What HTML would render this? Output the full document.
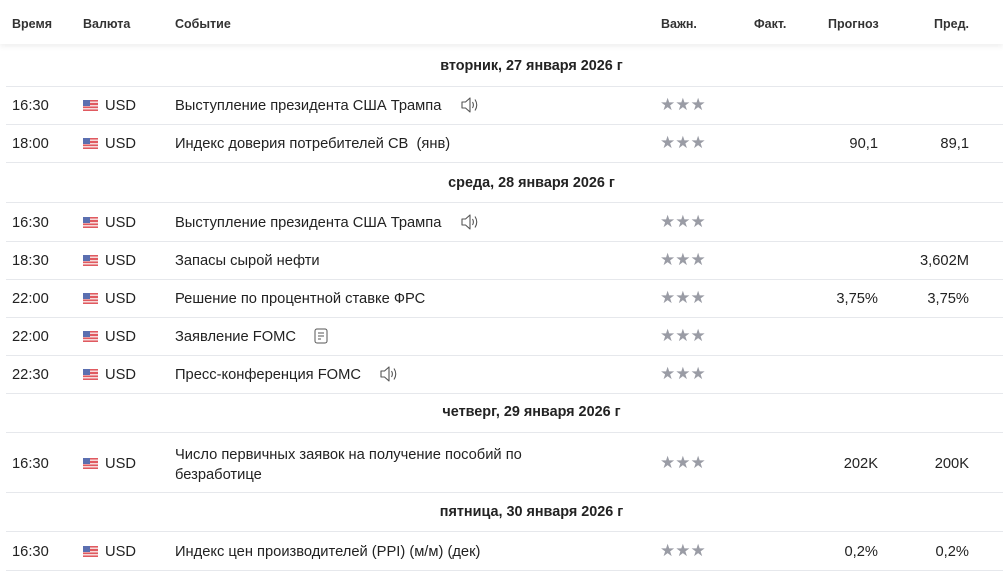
<!DOCTYPE html>
<html><head><meta charset="utf-8"><style>
body{margin:0;width:1003px;height:575px;overflow:hidden;background:#fff;font-family:"Liberation Sans",sans-serif;color:#1f2023;position:relative}
.hdr{position:absolute;left:0;top:0;width:1003px;height:44px;background:#fff;box-shadow:0 3px 5px rgba(0,0,0,0.06);z-index:2}
.h{position:absolute;top:17px;font-size:12.5px;font-weight:bold;color:#333}
.ln{position:absolute;left:6px;right:0;height:1px;background:#e6e8ec}
.d{position:absolute;left:60px;width:943px;text-align:center;font-size:14.4px;font-weight:bold;color:#222}
.t{position:absolute;font-size:14.7px;color:#222;white-space:nowrap;margin-top:1px}
.fl{position:absolute;width:15px;height:11px;background:repeating-linear-gradient(#e05a60 0 1.6px,#f6dada 1.6px 3.2px)}
.fl:before{content:"";position:absolute;left:0;top:0;width:7px;height:6px;background:#5b6fb0}
.st{position:absolute;left:660px;font-size:17px;color:#9a9ca5;line-height:17px;margin-top:-1px}
.r{text-align:right}
</style></head><body>
<div class="hdr">
<div class="h" style="left:12px">Время</div>
<div class="h" style="left:83px">Валюта</div>
<div class="h" style="left:175px">Событие</div>
<div class="h" style="left:661px">Важн.</div>
<div class="h" style="left:754px">Факт.</div>
<div class="h" style="left:828px">Прогноз</div>
<div class="h" style="left:934px">Пред.</div>
</div>
<div class="d" style="top:58px">вторник, 27 января 2026 г</div>
<div class="d" style="top:175px">среда, 28 января 2026 г</div>
<div class="d" style="top:404px">четверг, 29 января 2026 г</div>
<div class="d" style="top:504px">пятница, 30 января 2026 г</div>
<div class="ln" style="top:86px"></div><div class="ln" style="top:124px"></div><div class="ln" style="top:162px"></div><div class="ln" style="top:202px"></div><div class="ln" style="top:241px"></div><div class="ln" style="top:279px"></div><div class="ln" style="top:317px"></div><div class="ln" style="top:355px"></div><div class="ln" style="top:393px"></div><div class="ln" style="top:432px"></div><div class="ln" style="top:492px"></div><div class="ln" style="top:531px"></div><div class="ln" style="top:570px"></div>
<svg width="0" height="0" style="position:absolute"><defs><symbol id="sp" viewBox="0 0 20 20"><path d="M2 7h3.5l4.5-4v14l-4.5-4H2z" fill="none" stroke="#555" stroke-width="1.1" stroke-linejoin="round"/><path d="M12.5 7q1.8 3 0 6M15 4.5q3.5 5.5 0 11" fill="none" stroke="#555" stroke-width="1.1"/></symbol></defs></svg>

<div class="t" style="left:12px;top:97px">16:30</div><div class="fl" style="left:83px;top:100px"></div><div class="t" style="left:105px;top:97px">USD</div><div class="t" style="left:175px;top:97px">Выступление президента США Трампа</div><svg style="position:absolute;left:460px;top:95px" width="20" height="20"><use href="#sp"/></svg><div class="st" style="top:97px">★★★</div>

<div class="t" style="left:12px;top:135px">18:00</div><div class="fl" style="left:83px;top:138px"></div><div class="t" style="left:105px;top:135px">USD</div><div class="t" style="left:175px;top:135px">Индекс доверия потребителей CB&nbsp; (янв)</div><div class="st" style="top:135px">★★★</div><div class="t r" style="right:125px;top:135px">90,1</div><div class="t r" style="right:34px;top:135px">89,1</div>

<div class="t" style="left:12px;top:214px">16:30</div><div class="fl" style="left:83px;top:217px"></div><div class="t" style="left:105px;top:214px">USD</div><div class="t" style="left:175px;top:214px">Выступление президента США Трампа</div><svg style="position:absolute;left:460px;top:212px" width="20" height="20"><use href="#sp"/></svg><div class="st" style="top:214px">★★★</div>

<div class="t" style="left:12px;top:252px">18:30</div><div class="fl" style="left:83px;top:255px"></div><div class="t" style="left:105px;top:252px">USD</div><div class="t" style="left:175px;top:252px">Запасы сырой нефти</div><div class="st" style="top:252px">★★★</div><div class="t r" style="right:34px;top:252px">3,602M</div>

<div class="t" style="left:12px;top:290px">22:00</div><div class="fl" style="left:83px;top:293px"></div><div class="t" style="left:105px;top:290px">USD</div><div class="t" style="left:175px;top:290px">Решение по процентной ставке ФРС</div><div class="st" style="top:290px">★★★</div><div class="t r" style="right:125px;top:290px">3,75%</div><div class="t r" style="right:34px;top:290px">3,75%</div>

<div class="t" style="left:12px;top:328px">22:00</div><div class="fl" style="left:83px;top:331px"></div><div class="t" style="left:105px;top:328px">USD</div><div class="t" style="left:175px;top:328px">Заявление FOMC</div><svg style="position:absolute;left:314px;top:328px" width="15" height="17"><rect x="1" y="1" width="12" height="14" rx="2" fill="none" stroke="#555"/><path d="M4 5h6M4 8h6M4 11h3" stroke="#555"/></svg><div class="st" style="top:328px">★★★</div>

<div class="t" style="left:12px;top:366px">22:30</div><div class="fl" style="left:83px;top:369px"></div><div class="t" style="left:105px;top:366px">USD</div><div class="t" style="left:175px;top:366px">Пресс-конференция FOMC</div><svg style="position:absolute;left:379px;top:364px" width="20" height="20"><use href="#sp"/></svg><div class="st" style="top:366px">★★★</div>

<div class="t" style="left:12px;top:455px">16:30</div><div class="fl" style="left:83px;top:458px"></div><div class="t" style="left:105px;top:455px">USD</div><div class="t" style="left:175px;top:444px;line-height:20px">Число первичных заявок на получение пособий по<br>безработице</div><div class="st" style="top:455px">★★★</div><div class="t r" style="right:125px;top:455px">202K</div><div class="t r" style="right:34px;top:455px">200K</div>

<div class="t" style="left:12px;top:543px">16:30</div><div class="fl" style="left:83px;top:546px"></div><div class="t" style="left:105px;top:543px">USD</div><div class="t" style="left:175px;top:543px">Индекс цен производителей (PPI) (м/м) (дек)</div><div class="st" style="top:543px">★★★</div><div class="t r" style="right:125px;top:543px">0,2%</div><div class="t r" style="right:34px;top:543px">0,2%</div>
</body></html>
